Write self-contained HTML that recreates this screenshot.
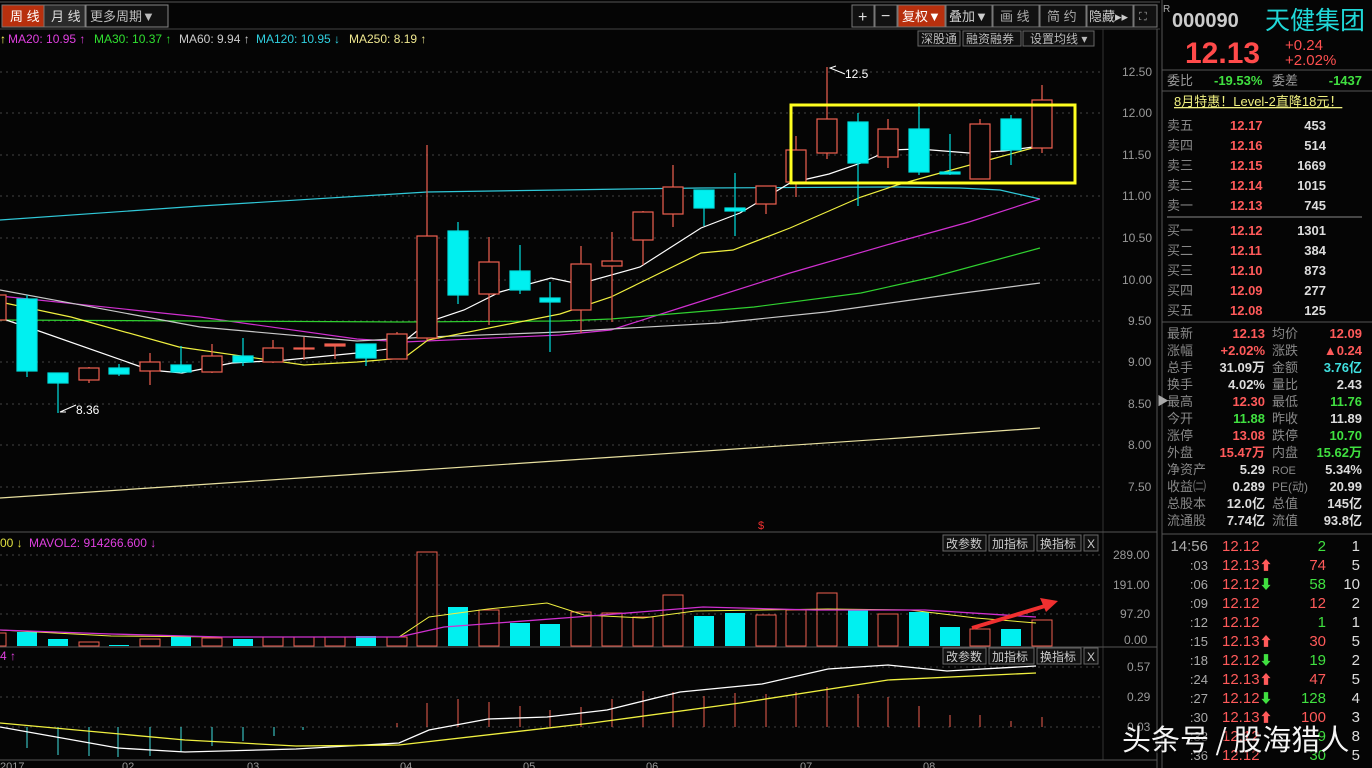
<!DOCTYPE html>
<html><head><meta charset="utf-8"><style>
body{margin:0;background:#000;width:1372px;height:768px;overflow:hidden;font-family:"Liberation Sans","Noto Sans CJK SC",sans-serif}
svg{position:absolute;left:0;top:0}
.t{font-family:"Liberation Sans","Noto Sans CJK SC",sans-serif}
</style></head><body>
<svg width="1372" height="768" viewBox="0 0 1372 768" xmlns="http://www.w3.org/2000/svg">
<rect width="1372" height="768" fill="#050505"/>
<g class="t" font-size="13">
<line x1="0" y1="2" x2="1160" y2="2" stroke="#555"/>
<rect x="2" y="5" width="42" height="22" fill="#b8300e" stroke="#777"/>
<text x="10" y="21" fill="#fff" font-size="13">周 线</text>
<rect x="44" y="5" width="41" height="22" fill="#2a2a2a" stroke="#777"/>
<text x="51" y="21" fill="#ddd" font-size="13">月 线</text>
<rect x="86" y="5" width="82" height="22" fill="#111" stroke="#888"/>
<text x="90" y="21" fill="#bbb" font-size="13">更多周期▼</text>
<g stroke="#777" fill="#111">
<rect x="852" y="5" width="22" height="22"/><rect x="875" y="5" width="22" height="22"/>
<rect x="898" y="5" width="47" height="22" fill="#b8300e"/><rect x="946" y="5" width="46" height="22"/>
<rect x="993" y="5" width="46" height="22"/><rect x="1040" y="5" width="46" height="22"/>
<rect x="1087" y="5" width="46" height="22"/><rect x="1134" y="5" width="23" height="22"/>
</g>
<text x="858" y="22" fill="#ddd" font-size="16">+</text><text x="881" y="21" fill="#ddd" font-size="16">−</text>
<text x="902" y="21" fill="#fff" font-size="13">复权▼</text><text x="949" y="21" fill="#ccc">叠加▼</text>
<text x="1000" y="21" fill="#aaa">画 线</text><text x="1047" y="21" fill="#aaa">简 约</text>
<text x="1089" y="21" fill="#ccc">隐藏▸▸</text><text x="1139" y="20" fill="#aaa" font-size="11">⛶</text>
<line x1="0" y1="29" x2="1160" y2="29" stroke="#444"/>
<g font-size="12">
<text x="0" y="43" fill="#ffff60">↑</text>
<text x="8" y="43" fill="#e040e0">MA20: 10.95 ↑</text>
<text x="94" y="43" fill="#30e030">MA30: 10.37 ↑</text>
<text x="179" y="43" fill="#ccc">MA60: 9.94 ↑</text>
<text x="256" y="43" fill="#30d0e0">MA120: 10.95 ↓</text>
<text x="349" y="43" fill="#f0e890">MA250: 8.19 ↑</text>
</g>
<g stroke="#666" fill="#111"><rect x="918" y="31" width="42" height="15"/><rect x="963" y="31" width="58" height="15"/><rect x="1023" y="31" width="71" height="15"/></g>
<g font-size="12" fill="#bbb"><text x="921" y="43">深股通</text><text x="966" y="43">融资融券</text><text x="1030" y="43">设置均线 ▾</text></g>
<line x1="1103" y1="29" x2="1103" y2="760" stroke="#333"/>
<line x1="1157" y1="29" x2="1157" y2="768" stroke="#555"/>
<line x1="1162" y1="0" x2="1162" y2="768" stroke="#555"/>
<g stroke="#444" stroke-dasharray="2,4">
<line x1="0" y1="72" x2="1100" y2="72"/><line x1="0" y1="113" x2="1100" y2="113"/><line x1="0" y1="155" x2="1100" y2="155"/><line x1="0" y1="196" x2="1100" y2="196"/><line x1="0" y1="238" x2="1100" y2="238"/><line x1="0" y1="280" x2="1100" y2="280"/><line x1="0" y1="321" x2="1100" y2="321"/><line x1="0" y1="362" x2="1100" y2="362"/><line x1="0" y1="404" x2="1100" y2="404"/><line x1="0" y1="445" x2="1100" y2="445"/><line x1="0" y1="487" x2="1100" y2="487"/>
<line x1="0" y1="555" x2="1100" y2="555"/><line x1="0" y1="585" x2="1100" y2="585"/><line x1="0" y1="614" x2="1100" y2="614"/>
<line x1="0" y1="667" x2="1100" y2="667"/><line x1="0" y1="697" x2="1100" y2="697"/><line x1="0" y1="727" x2="1100" y2="727"/>
</g>
<g font-size="12" fill="#999">
<text x="1122" y="76">12.50</text><text x="1122" y="117">12.00</text><text x="1122" y="159">11.50</text><text x="1122" y="200">11.00</text><text x="1122" y="242">10.50</text><text x="1122" y="284">10.00</text><text x="1128" y="325">9.50</text><text x="1128" y="366">9.00</text><text x="1128" y="408">8.50</text><text x="1128" y="449">8.00</text><text x="1128" y="491">7.50</text>
<text x="1113" y="559">289.00</text><text x="1113" y="589">191.00</text><text x="1120" y="618">97.20</text><text x="1124" y="644">0.00</text>
<text x="1127" y="671">0.57</text><text x="1127" y="701">0.29</text><text x="1127" y="731">0.03</text>
</g>
<line x1="0" y1="532" x2="1157" y2="532" stroke="#555"/>
<line x1="0" y1="647" x2="1157" y2="647" stroke="#555"/>
<line x1="0" y1="760" x2="1157" y2="760" stroke="#555"/>
<g fill="none" stroke-width="1.2">
<polyline stroke="#30c8d8" points="0,220 200,206 427,192 560,190 627,189 700,188 897,187 960,188 1000,190 1040,199"/>
<polyline stroke="#e8e0a0" points="0,498 300,478 600,458 900,438 1040,428"/>
<polyline stroke="#d030d0" points="0,296 200,317 357,339 404,342 560,335 611,330 683,307 790,273 897,242 969,222 1040,199"/>
<polyline stroke="#30d030" points="0,320 200,321 400,322 560,321 611,319 754,307 861,293 933,277 1040,248"/>
<polyline stroke="#c8c8c8" points="0,290 200,327 357,341 428,337 560,332 611,329 719,323 826,312 933,297 1040,283"/>
<polyline stroke="#f0f040" points="0,302 71,317 179,347 304,365 357,362 404,358 428,340 560,314 611,297 701,253 733,250 790,228 861,197 897,185 933,175 1040,146"/>
<polyline stroke="#ffffff" points="0,318 36,330 150,370 182,373 232,363 286,360 357,353 396,348 428,322 464,310 500,292 551,278 579,284 640,267 701,228 740,213 790,183 829,174 861,163 890,150 919,149 969,153 1004,151 1040,146"/>
</g>
<g stroke-width="1.2">
<g stroke="#f06050" fill="#050505"><rect x="-5" y="295" width="11" height="25"/></g>
<g fill="#00f0f0" stroke="#00e0e0">
<line x1="27" y1="295" x2="27" y2="377"/><rect x="17" y="299" width="20" height="72"/>
<line x1="58" y1="373" x2="58" y2="413"/><rect x="48" y="373" width="20" height="10"/>
<line x1="119" y1="364" x2="119" y2="376"/><rect x="109" y="368" width="20" height="6"/>
<line x1="181" y1="346" x2="181" y2="373"/><rect x="171" y="365" width="20" height="7"/>
<line x1="243" y1="338" x2="243" y2="366"/><rect x="233" y="356" width="20" height="6"/>
<line x1="366" y1="344" x2="366" y2="366"/><rect x="356" y="344" width="20" height="14"/>
<line x1="458" y1="222" x2="458" y2="304"/><rect x="448" y="231" width="20" height="64"/>
<line x1="520" y1="245" x2="520" y2="294"/><rect x="510" y="271" width="20" height="19"/>
<line x1="550" y1="282" x2="550" y2="352"/><rect x="540" y="298" width="20" height="4"/>
<line x1="704" y1="190" x2="704" y2="226"/><rect x="694" y="190" width="20" height="18"/>
<line x1="735" y1="173" x2="735" y2="236"/><rect x="725" y="208" width="20" height="3"/>
<line x1="858" y1="113" x2="858" y2="206"/><rect x="848" y="122" width="20" height="41"/>
<line x1="919" y1="103" x2="919" y2="175"/><rect x="909" y="129" width="20" height="43"/>
<line x1="950" y1="134" x2="950" y2="175"/><rect x="940" y="172" width="20" height="2"/>
<line x1="1011" y1="115" x2="1011" y2="165"/><rect x="1001" y="119" width="20" height="31"/>
</g>
<g stroke="#f06050" fill="#050505">
<line x1="89" y1="367" x2="89" y2="383"/><rect x="79" y="368" width="20" height="12"/>
<line x1="150" y1="353" x2="150" y2="385"/><rect x="140" y="362" width="20" height="9"/>
<line x1="212" y1="344" x2="212" y2="373"/><rect x="202" y="356" width="20" height="16"/>
<line x1="273" y1="340" x2="273" y2="363"/><rect x="263" y="348" width="20" height="14"/>
<line x1="304" y1="337" x2="304" y2="360"/><rect x="294" y="348" width="20" height="1"/>
<line x1="335" y1="344" x2="335" y2="359"/><rect x="325" y="344" width="20" height="2" fill="#f06050"/>
<line x1="397" y1="332" x2="397" y2="359"/><rect x="387" y="334" width="20" height="25"/>
<line x1="427" y1="145" x2="427" y2="340"/><rect x="417" y="236" width="20" height="102"/>
<line x1="489" y1="237" x2="489" y2="325"/><rect x="479" y="262" width="20" height="32"/>
<line x1="581" y1="246" x2="581" y2="333"/><rect x="571" y="264" width="20" height="46"/>
<line x1="612" y1="232" x2="612" y2="322"/><rect x="602" y="261" width="20" height="5"/>
<line x1="643" y1="211" x2="643" y2="265"/><rect x="633" y="212" width="20" height="28"/>
<line x1="673" y1="165" x2="673" y2="227"/><rect x="663" y="187" width="20" height="27"/>
<line x1="766" y1="186" x2="766" y2="214"/><rect x="756" y="186" width="20" height="18"/>
<line x1="796" y1="136" x2="796" y2="197"/><rect x="786" y="150" width="20" height="32"/>
<line x1="827" y1="67" x2="827" y2="159"/><rect x="817" y="119" width="20" height="34"/>
<line x1="888" y1="119" x2="888" y2="168"/><rect x="878" y="129" width="20" height="28"/>
<line x1="980" y1="119" x2="980" y2="179"/><rect x="970" y="124" width="20" height="55"/>
<line x1="1042" y1="85" x2="1042" y2="153"/><rect x="1032" y="100" width="20" height="48"/>
</g>
</g>
<rect x="791" y="105" width="284" height="78" fill="none" stroke="#ffff20" stroke-width="3"/>
<g stroke="#fff" fill="none"><polyline points="845,74 830,68 836,66"/><polyline points="76,405 60,412 66,412"/></g>
<text x="845" y="78" fill="#fff" font-size="12">12.5</text>
<text x="76" y="414" fill="#fff" font-size="12">8.36</text>
<text x="758" y="529" fill="#f03030" font-size="11">$</text>
<text x="0" y="547" fill="#e0e040" font-size="12">00 ↓</text>
<text x="29" y="547" fill="#e040e0" font-size="12">MAVOL2: 914266.600 ↓</text>
<g stroke="#666" fill="#111"><rect x="943" y="535" width="43" height="16"/><rect x="989" y="535" width="45" height="16"/><rect x="1037" y="535" width="44" height="16"/><rect x="1084" y="535" width="14" height="16"/>
<rect x="943" y="648" width="43" height="16"/><rect x="989" y="648" width="45" height="16"/><rect x="1037" y="648" width="44" height="16"/><rect x="1084" y="648" width="14" height="16"/></g>
<g font-size="12" fill="#ccc"><text x="946" y="548">改参数</text><text x="992" y="548">加指标</text><text x="1040" y="548">换指标</text><text x="1087" y="548">X</text>
<text x="946" y="661">改参数</text><text x="992" y="661">加指标</text><text x="1040" y="661">换指标</text><text x="1087" y="661">X</text></g>
<text x="0" y="660" fill="#e040e0" font-size="12">4 ↑</text>
<g fill="#00f0f0">
<rect x="17" y="632" width="20" height="14"/><rect x="48" y="639" width="20" height="7"/><rect x="109" y="645" width="20" height="1"/><rect x="171" y="637" width="20" height="9"/><rect x="233" y="639" width="20" height="7"/><rect x="356" y="636" width="20" height="10"/><rect x="448" y="607" width="20" height="39"/><rect x="510" y="623" width="20" height="23"/><rect x="540" y="624" width="20" height="22"/><rect x="694" y="616" width="20" height="30"/><rect x="725" y="613" width="20" height="33"/><rect x="848" y="609" width="20" height="37"/><rect x="909" y="612" width="20" height="34"/><rect x="940" y="627" width="20" height="19"/><rect x="1001" y="629" width="20" height="17"/>
</g>
<g fill="none" stroke="#f06050">
<rect x="-5" y="633" width="11" height="13"/><rect x="79" y="642" width="20" height="4"/><rect x="140" y="639" width="20" height="7"/><rect x="202" y="638" width="20" height="8"/><rect x="263" y="637" width="20" height="9"/><rect x="294" y="637" width="20" height="9"/><rect x="325" y="637" width="20" height="9"/><rect x="387" y="637" width="20" height="9"/><rect x="417" y="552" width="20" height="94"/><rect x="479" y="610" width="20" height="36"/><rect x="571" y="612" width="20" height="34"/><rect x="602" y="613" width="20" height="33"/><rect x="633" y="617" width="20" height="29"/><rect x="663" y="595" width="20" height="51"/><rect x="756" y="615" width="20" height="31"/><rect x="786" y="610" width="20" height="36"/><rect x="817" y="593" width="20" height="53"/><rect x="878" y="614" width="20" height="32"/><rect x="970" y="629" width="20" height="17"/><rect x="1032" y="620" width="20" height="26"/>
</g>
<polyline fill="none" stroke="#f0f040" points="0,630 111,636 222,637 399,637 429,617 488,609 547,603 584,615 643,618 695,611 828,609 910,610 976,618 1036,623"/>
<polyline fill="none" stroke="#d030d0" stroke-width="1.3" points="0,630 111,634 222,637 399,637 444,627 577,617 703,607 814,610 925,610 1036,617"/>
<line x1="972" y1="628" x2="1045" y2="606" stroke="#f03030" stroke-width="4"/>
<polygon points="1058,601 1040,598 1046,612" fill="#f03030"/>
<g stroke="#40e0e0"><line x1="27" y1="727" x2="27" y2="748"/><line x1="58" y1="727" x2="58" y2="755"/><line x1="89" y1="727" x2="89" y2="756"/><line x1="118" y1="727" x2="118" y2="757"/><line x1="150" y1="727" x2="150" y2="756"/><line x1="181" y1="727" x2="181" y2="752"/><line x1="212" y1="727" x2="212" y2="746"/><line x1="243" y1="727" x2="243" y2="741"/><line x1="274" y1="727" x2="274" y2="736"/><line x1="303" y1="727" x2="303" y2="730"/></g>
<g stroke="#f06050"><line x1="397" y1="727" x2="397" y2="723"/><line x1="427" y1="727" x2="427" y2="703"/><line x1="458" y1="727" x2="458" y2="699"/><line x1="489" y1="727" x2="489" y2="702"/><line x1="520" y1="727" x2="520" y2="706"/><line x1="550" y1="727" x2="550" y2="710"/><line x1="581" y1="727" x2="581" y2="707"/><line x1="612" y1="727" x2="612" y2="699"/><line x1="643" y1="727" x2="643" y2="691"/><line x1="673" y1="727" x2="673" y2="692"/><line x1="704" y1="727" x2="704" y2="696"/><line x1="735" y1="727" x2="735" y2="693"/><line x1="766" y1="727" x2="766" y2="694"/><line x1="796" y1="727" x2="796" y2="692"/><line x1="827" y1="727" x2="827" y2="687"/><line x1="858" y1="727" x2="858" y2="694"/><line x1="888" y1="727" x2="888" y2="697"/><line x1="919" y1="727" x2="919" y2="706"/><line x1="950" y1="727" x2="950" y2="715"/><line x1="980" y1="727" x2="980" y2="715"/><line x1="1011" y1="727" x2="1011" y2="721"/><line x1="1042" y1="727" x2="1042" y2="717"/></g>
<polyline fill="none" stroke="#fff" stroke-width="1.3" points="0,727 118,748 185,752 296,749 399,743 429,730 488,719 547,717 607,710 680,692 762,684 828,669 888,665 947,671 1036,666"/>
<polyline fill="none" stroke="#f0f040" stroke-width="1.3" points="0,723 185,740 296,746 399,745 592,723 740,703 888,680 1036,673"/>
<g font-size="11" fill="#999"><text x="0" y="770">2017</text><text x="122" y="770">02</text><text x="247" y="770">03</text><text x="400" y="770">04</text><text x="523" y="770">05</text><text x="646" y="770">06</text><text x="800" y="770">07</text><text x="923" y="770">08</text></g>
<text x="1157" y="405" fill="#aaa" font-size="12">▶</text>
<text x="1163" y="12" fill="#aaa" font-size="10">R</text>
<text x="1172" y="27" fill="#ccc" font-size="20" font-weight="bold">000090</text>
<text x="1265" y="29" fill="#20d8d8" font-size="25">天健集团</text>
<text x="1185" y="63" fill="#ff4a4a" font-size="30" font-weight="bold">12.13</text>
<text x="1285" y="50" fill="#ff5050" font-size="15">+0.24</text>
<text x="1285" y="65" fill="#ff5050" font-size="15">+2.02%</text>
<line x1="1162" y1="70" x2="1372" y2="70" stroke="#555"/>
<text x="1167" y="85" fill="#999" font-size="13">委比</text>
<text x="1214" y="85" fill="#40e040" font-size="13" font-weight="bold">-19.53%</text>
<text x="1272" y="85" fill="#999" font-size="13">委差</text>
<text x="1362" y="85" fill="#40e040" font-size="13" font-weight="bold" text-anchor="end">-1437</text>
<line x1="1162" y1="91" x2="1372" y2="91" stroke="#555"/>
<text x="1174" y="106" fill="#f0f080" font-size="13" text-decoration="underline">8月特惠！Level-2直降18元！</text>
<g font-size="13" font-weight="bold">
<g fill="#888" font-weight="normal"><text x="1167" y="130">卖五</text><text x="1167" y="150">卖四</text><text x="1167" y="170">卖三</text><text x="1167" y="190">卖二</text><text x="1167" y="210">卖一</text><text x="1167" y="235">买一</text><text x="1167" y="255">买二</text><text x="1167" y="275">买三</text><text x="1167" y="295">买四</text><text x="1167" y="315">买五</text></g>
<g fill="#ff5a5a"><text x="1230" y="130">12.17</text><text x="1230" y="150">12.16</text><text x="1230" y="170">12.15</text><text x="1230" y="190">12.14</text><text x="1230" y="210">12.13</text><text x="1230" y="235">12.12</text><text x="1230" y="255">12.11</text><text x="1230" y="275">12.10</text><text x="1230" y="295">12.09</text><text x="1230" y="315">12.08</text></g>
<g fill="#ddd" text-anchor="end"><text x="1326" y="130">453</text><text x="1326" y="150">514</text><text x="1326" y="170">1669</text><text x="1326" y="190">1015</text><text x="1326" y="210">745</text><text x="1326" y="235">1301</text><text x="1326" y="255">384</text><text x="1326" y="275">873</text><text x="1326" y="295">277</text><text x="1326" y="315">125</text></g>
</g>
<line x1="1167" y1="217" x2="1362" y2="217" stroke="#888"/>
<line x1="1162" y1="322" x2="1372" y2="322" stroke="#555"/>
<g font-size="13">
<g fill="#888"><text x="1167" y="338">最新</text><text x="1167" y="355">涨幅</text><text x="1167" y="372">总手</text><text x="1167" y="389">换手</text><text x="1167" y="406">最高</text><text x="1167" y="423">今开</text><text x="1167" y="440">涨停</text><text x="1167" y="457">外盘</text><text x="1167" y="474">净资产</text><text x="1167" y="491">收益㈡</text><text x="1167" y="508">总股本</text><text x="1167" y="525">流通股</text>
<text x="1272" y="338">均价</text><text x="1272" y="355">涨跌</text><text x="1272" y="372">金额</text><text x="1272" y="389">量比</text><text x="1272" y="406">最低</text><text x="1272" y="423">昨收</text><text x="1272" y="440">跌停</text><text x="1272" y="457">内盘</text><text x="1272" y="474" font-size="11">ROE</text><text x="1272" y="491" font-size="12">PE(动)</text><text x="1272" y="508">总值</text><text x="1272" y="525">流值</text></g>
<g text-anchor="end" font-weight="bold">
<text x="1265" y="338" fill="#ff5a5a">12.13</text><text x="1265" y="355" fill="#ff5a5a">+2.02%</text><text x="1265" y="372" fill="#ddd">31.09万</text><text x="1265" y="389" fill="#ddd">4.02%</text><text x="1265" y="406" fill="#ff5a5a">12.30</text><text x="1265" y="423" fill="#40e040">11.88</text><text x="1265" y="440" fill="#ff5a5a">13.08</text><text x="1265" y="457" fill="#ff5a5a">15.47万</text><text x="1265" y="474" fill="#ddd">5.29</text><text x="1265" y="491" fill="#ddd">0.289</text><text x="1265" y="508" fill="#ddd">12.0亿</text><text x="1265" y="525" fill="#ddd">7.74亿</text>
<text x="1362" y="338" fill="#ff5a5a">12.09</text><text x="1362" y="355" fill="#ff5a5a">▲0.24</text><text x="1362" y="372" fill="#40e0e0">3.76亿</text><text x="1362" y="389" fill="#ddd">2.43</text><text x="1362" y="406" fill="#40e040">11.76</text><text x="1362" y="423" fill="#ddd">11.89</text><text x="1362" y="440" fill="#40e040">10.70</text><text x="1362" y="457" fill="#40e040">15.62万</text><text x="1362" y="474" fill="#ddd">5.34%</text><text x="1362" y="491" fill="#ddd">20.99</text><text x="1362" y="508" fill="#ddd">145亿</text><text x="1362" y="525" fill="#ddd">93.8亿</text>
</g></g>
<line x1="1162" y1="534" x2="1372" y2="534" stroke="#555"/>
<g font-size="15">
<g fill="#aaa" text-anchor="end"><text x="1208" y="551">14:56</text><text x="1208" y="570" font-size="13">:03</text><text x="1208" y="589" font-size="13">:06</text><text x="1208" y="608" font-size="13">:09</text><text x="1208" y="627" font-size="13">:12</text><text x="1208" y="646" font-size="13">:15</text><text x="1208" y="665" font-size="13">:18</text><text x="1208" y="684" font-size="13">:24</text><text x="1208" y="703" font-size="13">:27</text><text x="1208" y="722" font-size="13">:30</text><text x="1208" y="741" font-size="13">:33</text><text x="1208" y="760" font-size="13">:36</text></g>
<g fill="#ff5a5a"><text x="1222" y="551">12.12</text><text x="1222" y="570">12.13<tspan font-size="13">⬆</tspan></text><text x="1222" y="589">12.12<tspan fill="#40e040" font-size="13">⬇</tspan></text><text x="1222" y="608">12.12</text><text x="1222" y="627">12.12</text><text x="1222" y="646">12.13<tspan font-size="13">⬆</tspan></text><text x="1222" y="665">12.12<tspan fill="#40e040" font-size="13">⬇</tspan></text><text x="1222" y="684">12.13<tspan font-size="13">⬆</tspan></text><text x="1222" y="703">12.12<tspan fill="#40e040" font-size="13">⬇</tspan></text><text x="1222" y="722">12.13<tspan font-size="13">⬆</tspan></text><text x="1222" y="741">12.12</text><text x="1222" y="760">12.12</text></g>
<g text-anchor="end"><text x="1326" y="551" fill="#40e040">2</text><text x="1326" y="570" fill="#ff5a5a">74</text><text x="1326" y="589" fill="#40e040">58</text><text x="1326" y="608" fill="#ff5a5a">12</text><text x="1326" y="627" fill="#40e040">1</text><text x="1326" y="646" fill="#ff5a5a">30</text><text x="1326" y="665" fill="#40e040">19</text><text x="1326" y="684" fill="#ff5a5a">47</text><text x="1326" y="703" fill="#40e040">128</text><text x="1326" y="722" fill="#ff5a5a">100</text><text x="1326" y="741" fill="#40e040">9</text><text x="1326" y="760" fill="#40e040">30</text></g>
<g text-anchor="end" fill="#ddd"><text x="1360" y="551">1</text><text x="1360" y="570">5</text><text x="1360" y="589">10</text><text x="1360" y="608">2</text><text x="1360" y="627">1</text><text x="1360" y="646">5</text><text x="1360" y="665">2</text><text x="1360" y="684">5</text><text x="1360" y="703">4</text><text x="1360" y="722">3</text><text x="1360" y="741">8</text><text x="1360" y="760">5</text></g>
</g>
<text x="1124" y="752" fill="#000" opacity="0.5" font-size="29" font-family="Noto Sans CJK SC,sans-serif">头条号 / 股海猎人</text>
<text x="1122" y="750" fill="#f4f4f4" font-size="29" font-family="Noto Sans CJK SC,sans-serif">头条号 / 股海猎人</text>
</g>
</svg>
</body></html>
